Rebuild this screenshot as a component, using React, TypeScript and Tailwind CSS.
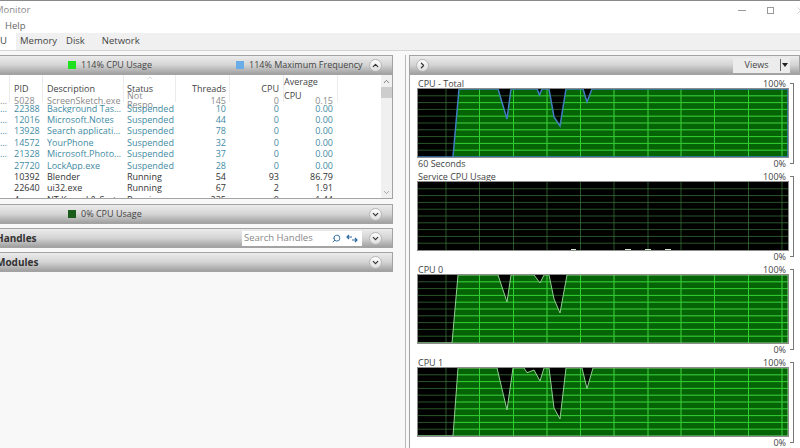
import React from 'react';
import { ChevronUp, ChevronDown, ChevronRight, Search, X } from 'lucide-react';

const BLUE = 'text-[#3f8ba3]';

const rows = [
  { lead: '…', pid: '5028', desc: 'ScreenSketch.exe', status: 'Not Respo...', threads: '145', cpu: '0', avg: '0.15', tone: 'text-[#8a8a8a]' },
  { lead: '…', pid: '22388', desc: 'Background Task ...', status: 'Suspended', threads: '10', cpu: '0', avg: '0.00', tone: BLUE },
  { lead: '…', pid: '12016', desc: 'Microsoft.Notes', status: 'Suspended', threads: '44', cpu: '0', avg: '0.00', tone: BLUE },
  { lead: '…', pid: '13928', desc: 'Search application', status: 'Suspended', threads: '78', cpu: '0', avg: '0.00', tone: BLUE },
  { lead: '…', pid: '14572', desc: 'YourPhone', status: 'Suspended', threads: '32', cpu: '0', avg: '0.00', tone: BLUE },
  { lead: '…', pid: '21328', desc: 'Microsoft.Photos.e...', status: 'Suspended', threads: '37', cpu: '0', avg: '0.00', tone: BLUE },
  { lead: '', pid: '27720', desc: 'LockApp.exe', status: 'Suspended', threads: '28', cpu: '0', avg: '0.00', tone: BLUE },
  { lead: '', pid: '10392', desc: 'Blender', status: 'Running', threads: '54', cpu: '93', avg: '86.79', tone: 'text-[#333]' },
  { lead: '', pid: '22640', desc: 'ui32.exe', status: 'Running', threads: '67', cpu: '2', avg: '1.91', tone: 'text-[#333]' },
  { lead: '', pid: '4', desc: 'NT Kernel & System', status: 'Running', threads: '235', cpu: '0', avg: '1.44', tone: 'text-[#333]' },
];

const COLS = 'grid grid-cols-[10px_33px_81px_52px_54px_54px_54px_1fr]';

const Round = ({ up }: { up?: boolean }) => (
  <div className="flex h-[13px] w-[13px] items-center justify-center rounded-full border border-[#b5b5b5] bg-gradient-to-b from-white to-[#dcdcdc]">
    {up ? <ChevronUp size={9} strokeWidth={3.2} color="#333" /> : <ChevronDown size={9} strokeWidth={3.2} color="#333" />}
  </div>
);

const Bar = ({ className = '', children }: { className?: string; children: React.ReactNode }) => (
  <div className={`flex h-5 shrink-0 items-center border border-[#a3a3a3] bg-gradient-to-b from-[#ececec] via-[#d4d4d4] to-[#a0a0a0] ${className}`}>
    {children}
  </div>
);

const V_LINES = [28, 61.5, 95.5, 129, 162.5, 196, 230, 263, 296.5, 330.5, 364];
const H_LINES = [6.8, 13.6, 20.4, 27.2, 34, 40.8, 47.6, 54.4, 61.2];

const Graph = ({ shape, blue }: { shape?: string; blue?: boolean }) => {
  const id = shape ? 'grid-on' : 'grid-off';
  return (
    <svg viewBox="0 0 370 68" className="block h-[68px] w-[370px] bg-black">
      {shape && <polygon points={shape} fill="#056405" />}
      {V_LINES.map(x => (
        <line key={`${id}v${x}`} x1={x} x2={x} y1={0} y2={68} stroke="#3f7f3f" strokeWidth={0.9} opacity={0.75} />
      ))}
      {H_LINES.map(y => (
        <line key={`${id}h${y}`} x1={0} x2={370} y1={y} y2={y} stroke="#3f7f3f" strokeWidth={0.9} opacity={0.75} />
      ))}
      {shape && (
        <>
          <clipPath id={`clip${shape.length}`}>
            <polygon points={shape} />
          </clipPath>
          <g clipPath={`url(#clip${shape.length})`}>
            {V_LINES.map(x => (
              <line key={`g${x}`} x1={x} x2={x} y1={0} y2={68} stroke="#2fcf2f" strokeWidth={1} />
            ))}
            {H_LINES.map(y => (
              <line key={`g${y}`} x1={0} x2={370} y1={y} y2={y} stroke="#2fcf2f" strokeWidth={1} />
            ))}
          </g>
          <polyline points={shape} fill="none" stroke={blue ? '#3f7fc0' : '#8fd08f'} strokeWidth={blue ? 1.5 : 1} />
        </>
      )}
      {!shape && (
        <>
          <line x1={153} x2={158} y1={67.5} y2={67.5} stroke="#cfe8cf" />
          <line x1={207} x2={213} y1={67.5} y2={67.5} stroke="#cfe8cf" />
          <line x1={227} x2={233} y1={67.5} y2={67.5} stroke="#cfe8cf" />
          <line x1={247} x2={253} y1={67.5} y2={67.5} stroke="#cfe8cf" />
        </>
      )}
    </svg>
  );
};

const GraphBlock = ({ title, foot, shape, blue }: { title: string; foot?: string; shape?: string; blue?: boolean }) => (
  <div className="relative w-[370px] text-[9px] leading-none text-[#444]">
    <div className="flex h-3 items-center justify-between pr-0.5">
      <span>{title}</span>
      <span>100%</span>
    </div>
    <div className="outline outline-1 outline-[#8c8c8c]">
      <Graph shape={shape} blue={blue} />
    </div>
    <div className="flex h-[13px] items-center justify-between pr-0.5">
      <span>{foot}</span>
      <span>0%</span>
    </div>
    <div className="absolute left-[372px] top-1.5 h-[81px] w-1 border-y border-r border-[#777]" />
  </div>
);

const total = '0,68 35,68 41,0 80,0 89,30 93,0 119,0 121.5,6 124,0 131,0 136,28 142,37 148,0 165,0 169,13 174,0 370,0 370,68 0,68';
const cpu0 = '0,68 34,68 40,0 80,0 89,27 93,0 116,0 122,8 126,0 131,0 136,24 142,38 149,0 370,0 370,68 0,68';
const cpu1 = '0,68 35,68 40,0 79,0 89,42 95,0 106,0 109,4.7 116,2 122,13 126,0 131,0 136,40 142,51 148,0 164,0 169,20.7 175,0 370,0 370,68 0,68';

export default function App() {
  return (
    <div className="flex h-[448px] w-[800px] flex-col overflow-hidden bg-white font-['Open_Sans','Noto_Sans',sans-serif] text-[9px] text-[#444]">
      <div className="h-px shrink-0 bg-[#8a8a8a]" />
      {/* title bar */}
      <div className="flex h-[19px] shrink-0 items-center justify-between">
        <span className="-ml-[5px] text-[9.5px] text-[#8a8a8a]">Monitor</span>
        <div className="-mr-1.5 flex items-center gap-[21px] text-[#999]">
          <div className="h-px w-2 bg-[#999]" />
          <div className="h-[7px] w-[7px] border border-[#999]" />
          <X size={11} strokeWidth={1} />
        </div>
      </div>
      {/* menu */}
      <div className="flex h-[13px] shrink-0 items-center pl-[5px] text-[9.5px] text-[#666]">Help</div>
      {/* tabs */}
      <div className="flex h-[18px] shrink-0 items-end border-b border-[#d4d4d4] bg-[#f0f0f0] text-[9.5px] text-[#444]">
        <div className="flex h-[18px] w-4 items-center bg-white">U</div>
        <div className="flex h-[18px] items-center pl-1 pr-[5px]">Memory</div>
        <div className="flex h-[18px] items-center px-[4px]">Disk</div>
        <div className="flex h-[18px] items-center pl-[13px]">Network</div>
      </div>
      {/* main */}
      <div className="flex min-h-0 flex-1 bg-[#f8f8f8] pt-1">
        <div className="flex w-[393px] shrink-0 flex-col">
          <Bar className="relative border-l-0">
            <div className="flex items-center gap-[5px] pl-[68px]">
              <span className="h-2 w-2 bg-[#1fe01f]" />
              <span>114% CPU Usage</span>
            </div>
            <div className="flex items-center gap-[5px] pl-[84px]">
              <span className="h-2 w-2 bg-[#6aace8]" />
              <span>114% Maximum Frequency</span>
            </div>
            <div className="ml-auto mr-[10px]">
              <Round up />
            </div>
          </Bar>
          <div className="relative h-[124px] shrink-0 overflow-hidden border-r border-b border-[#a3a3a3] bg-white">
            <div className={`${COLS} h-4 items-center bg-white text-[#444]`}>
              <div className="h-full border-r border-[#ececec]" />
              <div className="flex h-full items-center border-r border-[#ececec] pl-1">PID</div>
              <div className="flex h-full items-center border-r border-[#ececec] pl-1">Description</div>
              <div className="relative flex h-full items-center border-r border-[#ececec] pl-[3px]">
                Status
                <ChevronUp size={8} strokeWidth={1} className="absolute -top-px left-[22px] text-[#888]" />
              </div>
              <div className="flex h-full items-center justify-end border-r border-[#ececec] pr-[3px]">Threads</div>
              <div className="flex h-full items-center justify-end border-r border-[#ececec] pr-1">CPU</div>
              <div className="flex h-full items-center justify-end border-r border-[#ececec] pr-1">Average CPU</div>
            </div>
            {rows.map(r => (
              <div key={r.pid} className={`${COLS} h-[11.4px] items-center leading-none ${r.tone}`}>
                <div className="overflow-hidden">{r.lead}</div>
                <div className="pl-1">{r.pid}</div>
                <div className="truncate pl-1">{r.desc}</div>
                <div className="pl-[3px]">{r.status}</div>
                <div className="pr-1 text-right">{r.threads}</div>
                <div className="pr-[5px] text-right">{r.cpu}</div>
                <div className="pr-[5px] text-right">{r.avg}</div>
              </div>
            ))}
            {/* scrollbar */}
            <div className="absolute right-0 top-0 flex h-full w-[11px] flex-col items-center bg-[#f0f0f0]">
              <ChevronUp size={9} strokeWidth={2} className="mt-[2px] text-[#555]" />
              <div className="mt-[1px] h-[11px] w-full bg-[#cdcdcd]" />
              <ChevronDown size={9} strokeWidth={2} className="mb-[1px] mt-auto text-[#888]" />
            </div>
          </div>
          <div className="flex flex-col gap-1 pt-[5px]">
            <Bar className="border-l-0">
              <div className="flex items-center gap-[5px] pl-[68px]">
                <span className="h-2 w-2 bg-[#1a5c1a]" />
                <span>0% CPU Usage</span>
              </div>
              <div className="ml-auto mr-[10px]">
                <Round />
              </div>
            </Bar>
            <Bar className="border-l-0">
              <span className="-ml-[4px] text-[10px] font-bold text-[#333]">Handles</span>
              <div className="ml-auto mr-[7px] flex h-[15px] w-[120px] items-center bg-white pl-0.5 pr-1 text-[9.5px] text-[#888]">
                <span>Search Handles</span>
                <Search size={9} strokeWidth={2.4} className="ml-auto -scale-x-100 text-[#2a6aa0]" />
                <svg width="12" height="9" viewBox="0 0 12 9" className="ml-[5px]" fill="none" stroke="#2a6aa0" strokeWidth="1.2">
                  <path d="M1 3h5M3 1 1 3l2 2M6 6h5M9 4l2 2-2 2" />
                </svg>
              </div>
              <div className="mr-[10px]">
                <Round />
              </div>
            </Bar>
            <Bar className="border-l-0">
              <span className="-ml-[4px] text-[10px] font-bold text-[#333]">Modules</span>
              <div className="ml-auto mr-[10px]">
                <Round />
              </div>
            </Bar>
          </div>
        </div>
        <div className="ml-3 h-full w-px bg-[#b9b9b9]" />
        <div className="ml-[3px] flex min-w-0 flex-1 flex-col border-l border-[#a3a3a3] bg-white">
          <Bar className="border-l-0 pl-[6px]">
            <div className="flex h-[13px] w-[13px] items-center justify-center rounded-full border border-[#b5b5b5] bg-gradient-to-b from-white to-[#dcdcdc]">
              <ChevronRight size={9} strokeWidth={3.2} color="#333" />
            </div>
            <div className="ml-auto mr-[9px] flex h-[15px] w-[57px] items-center bg-[#ececec] text-[#444]">
              <span className="w-[47px] text-center">Views</span>
              <span className="h-3 w-px bg-[#666]" />
              <span className="ml-[1px] h-0 w-0 border-x-[3.5px] border-t-[4px] border-x-transparent border-t-[#222]" />
            </div>
          </Bar>
          <div className="flex flex-col pl-2 pt-0.5">
            <GraphBlock title="CPU - Total" foot="60 Seconds" shape={total} blue />
            <GraphBlock title="Service CPU Usage" />
            <GraphBlock title="CPU 0" shape={cpu0} />
            <GraphBlock title="CPU 1" shape={cpu1} />
          </div>
        </div>
      </div>
    </div>
  );
}
